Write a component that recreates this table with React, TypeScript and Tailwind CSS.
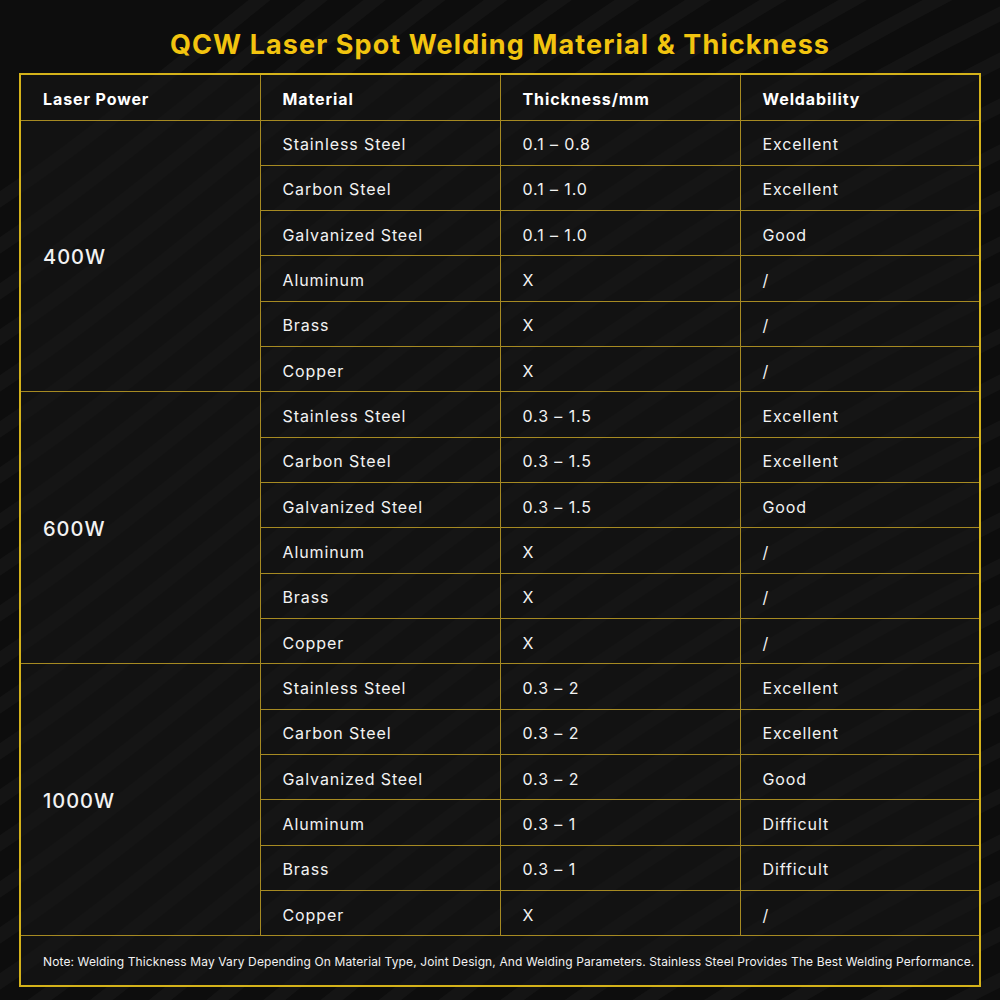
import React from "react";

type Row = { material: string; thickness: string; weld: string };

const GROUPS: { power: string; rows: Row[] }[] = [
  {
    power: "400W",
    rows: [
      { material: "Stainless Steel", thickness: "0.1 – 0.8", weld: "Excellent" },
      { material: "Carbon Steel", thickness: "0.1 – 1.0", weld: "Excellent" },
      { material: "Galvanized Steel", thickness: "0.1 – 1.0", weld: "Good" },
      { material: "Aluminum", thickness: "X", weld: "/" },
      { material: "Brass", thickness: "X", weld: "/" },
      { material: "Copper", thickness: "X", weld: "/" },
    ],
  },
  {
    power: "600W",
    rows: [
      { material: "Stainless Steel", thickness: "0.3 – 1.5", weld: "Excellent" },
      { material: "Carbon Steel", thickness: "0.3 – 1.5", weld: "Excellent" },
      { material: "Galvanized Steel", thickness: "0.3 – 1.5", weld: "Good" },
      { material: "Aluminum", thickness: "X", weld: "/" },
      { material: "Brass", thickness: "X", weld: "/" },
      { material: "Copper", thickness: "X", weld: "/" },
    ],
  },
  {
    power: "1000W",
    rows: [
      { material: "Stainless Steel", thickness: "0.3 – 2", weld: "Excellent" },
      { material: "Carbon Steel", thickness: "0.3 – 2", weld: "Excellent" },
      { material: "Galvanized Steel", thickness: "0.3 – 2", weld: "Good" },
      { material: "Aluminum", thickness: "0.3 – 1", weld: "Difficult" },
      { material: "Brass", thickness: "0.3 – 1", weld: "Difficult" },
      { material: "Copper", thickness: "X", weld: "/" },
    ],
  },
];

// soft diagonal wave lines behind the table
const Waves = () => {
  const lines = Array.from({ length: 46 }, (_, i) => i);
  return (
    <svg className="absolute inset-0 h-full w-full" viewBox="0 0 1000 1000" preserveAspectRatio="none">
      {lines.map((i) => {
        const o = i * 46 - 500;
        return (
          <path
            key={i}
            d={`M ${-100} ${o + 760} C 200 ${o + 600}, 450 ${o + 260}, 1100 ${o - 40}`}
            stroke="#ffffff"
            strokeOpacity={0.03}
            strokeWidth={14}
            fill="none"
          />
        );
      })}
    </svg>
  );
};

const cell = "border border-[#a68a22] pl-[22px] pt-[3px] align-middle";

export default function App() {
  return (
    <div
      className="relative h-[1000px] w-[1000px] overflow-hidden bg-[#0d0d0d] text-[#f2f2f2]"
      style={{ fontFamily: "Inter, 'Open Sans', sans-serif" }}
    >
      <Waves />
      <div className="relative flex flex-col items-center">
        <h1 className="mt-[30px] h-[30px] text-[27px] font-bold leading-[30px] tracking-[1.1px] text-[#f2c40f]">
          QCW Laser Spot Welding Material &amp; Thickness
        </h1>
        <table className="mt-[13px] w-[960px] table-fixed border-collapse border-2 border-[#d4b21a] bg-[#161616]/60">
          <colgroup>
            <col className="w-[240px]" />
            <col className="w-[240px]" />
            <col className="w-[240px]" />
            <col className="w-[240px]" />
          </colgroup>
          <thead>
            <tr className="h-[46px] text-left text-[16px] font-semibold tracking-[0.9px] text-white">
              <th className={cell}>Laser Power</th>
              <th className={cell}>Material</th>
              <th className={cell}>Thickness/mm</th>
              <th className={cell}>Weldability</th>
            </tr>
          </thead>
          <tbody className="text-[16px] tracking-[0.9px]">
            {GROUPS.map((g) =>
              g.rows.map((r, i) => (
                <tr key={g.power + r.material} className="h-[45.33px]">
                  {i === 0 && (
                    <td rowSpan={6} className={`${cell} text-[20px] font-medium tracking-[1px]`}>
                      {g.power}
                    </td>
                  )}
                  <td className={cell}>{r.material}</td>
                  <td className={cell}>{r.thickness}</td>
                  <td className={cell}>{r.weld}</td>
                </tr>
              ))
            )}
            <tr className="h-[50px]">
              <td colSpan={4} className={`${cell} whitespace-nowrap text-[12px] tracking-[0.12px]`}>
                Note: Welding Thickness May Vary Depending On Material Type, Joint Design, And Welding Parameters. Stainless Steel Provides The Best Welding Performance.
              </td>
            </tr>
          </tbody>
        </table>
      </div>
    </div>
  );
}
